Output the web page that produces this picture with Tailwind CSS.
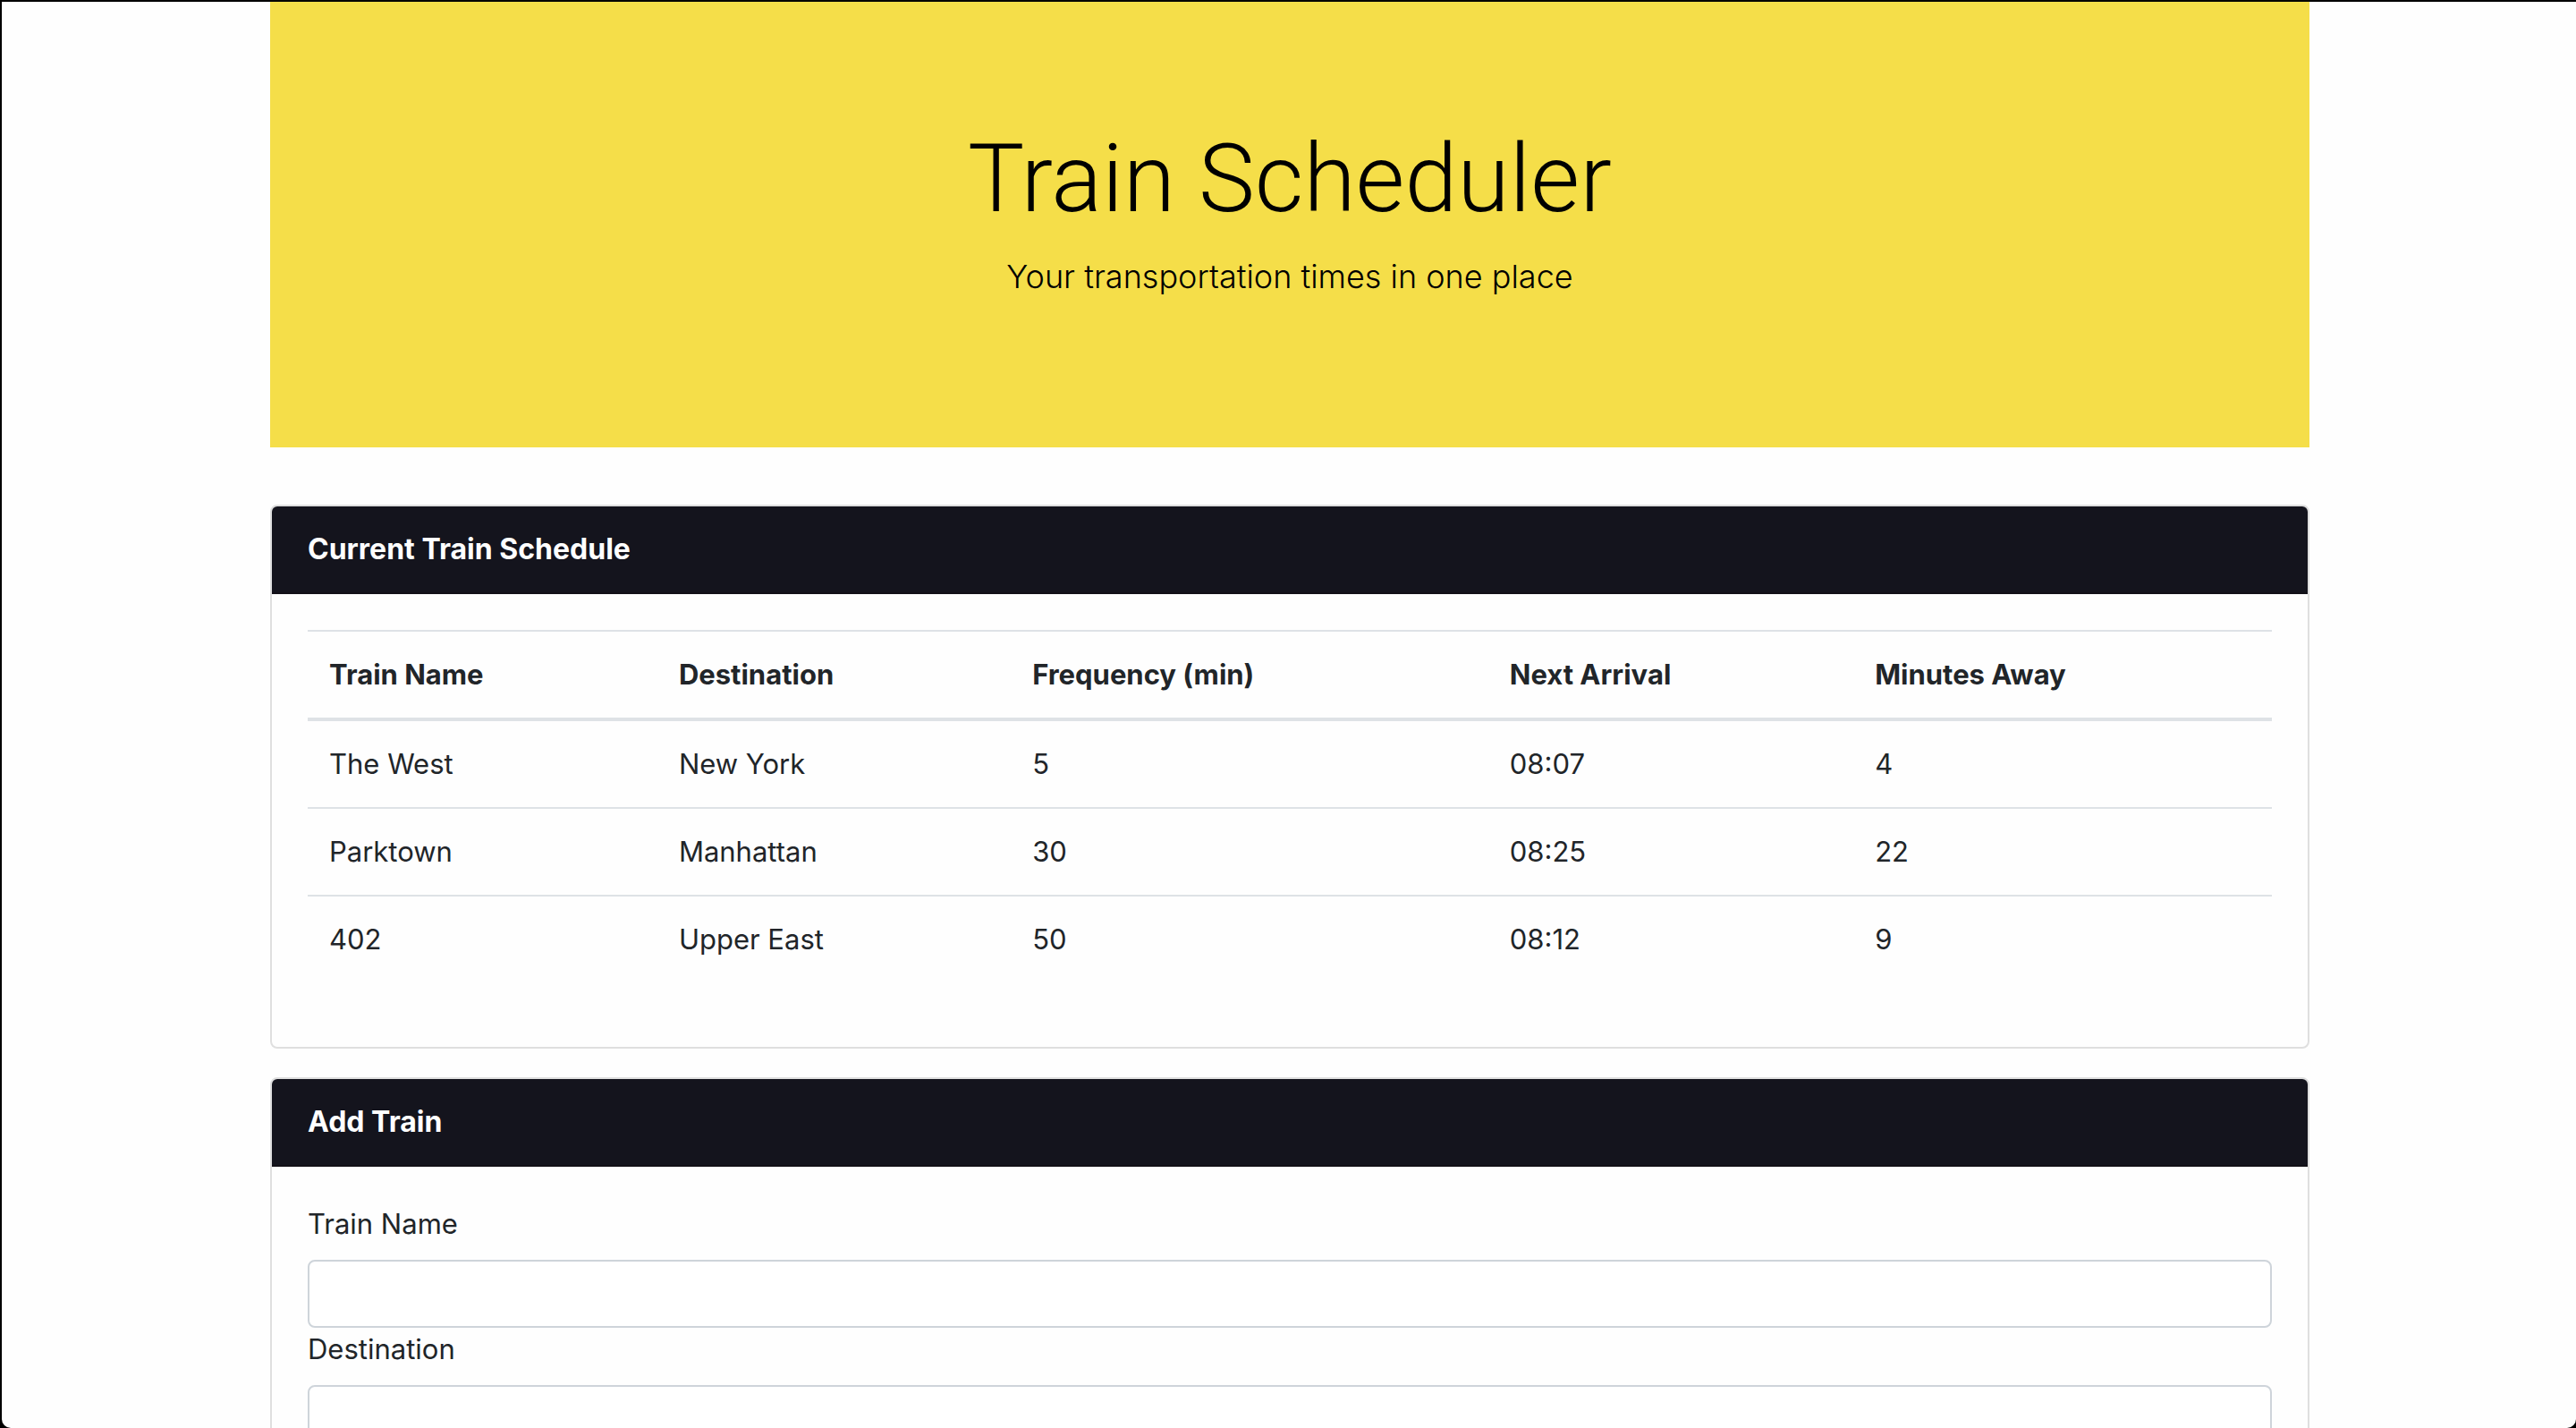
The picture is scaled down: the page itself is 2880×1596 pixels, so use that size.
<!DOCTYPE html>
<html lang="en">
<head>
<meta charset="utf-8">
<meta name="viewport" content="width=device-width, initial-scale=1">
<title>Train Scheduler</title>
<script src="https://cdn.jsdelivr.net/npm/@tailwindcss/browser@4"></script>
</head>
<body class="h-screen overflow-hidden bg-black pt-[2px] pl-[2px] font-['Inter',sans-serif] text-[31px] leading-[48px] text-[#212529]">
  <div class="h-full overflow-hidden rounded-b-[10px] bg-[#fefefe] pr-[298px] pl-[300px]">

    <header class="bg-[#f5de49] pt-[131px] pb-[125px] text-center font-light text-black">
      <h1 class="mb-3 font-['Roboto',sans-serif] text-[106px] leading-[134px]">Train Scheduler</h1>
      <p class="mb-9 text-[36px] leading-[60px]">Your transportation times in one place</p>
    </header>

    <main class="mt-16 flex flex-col gap-8">
      <section class="overflow-hidden rounded-lg border-2 border-[#dfdfdf]">
        <h2 class="border-b-2 border-[#121017] bg-[#14141d] px-10 py-6 text-[32px] leading-[48px] font-bold text-white">Current Train Schedule</h2>
        <div class="p-10 pb-18">
          <table class="w-full table-fixed border-collapse text-left">
            <thead>
              <tr class="border-t-2 border-b-4 border-[#dee2e6]">
                <th scope="col" class="w-[17.8%] px-6 py-6 font-bold">Train Name</th>
                <th scope="col" class="w-[18%] px-6 py-6 font-bold">Destination</th>
                <th scope="col" class="w-[24.3%] px-6 py-6 font-bold">Frequency (min)</th>
                <th scope="col" class="w-[18.6%] px-6 py-6 font-bold">Next Arrival</th>
                <th scope="col" class="px-6 py-6 font-bold">Minutes Away</th>
              </tr>
            </thead>
            <tbody class="divide-y-2 divide-[#dee2e6]">
              <tr>
                <td class="px-6 py-6">The West</td>
                <td class="px-6 py-6">New York</td>
                <td class="px-6 py-6">5</td>
                <td class="px-6 py-6">08:07</td>
                <td class="px-6 py-6">4</td>
              </tr>
              <tr>
                <td class="px-6 py-6">Parktown</td>
                <td class="px-6 py-6">Manhattan</td>
                <td class="px-6 py-6">30</td>
                <td class="px-6 py-6">08:25</td>
                <td class="px-6 py-6">22</td>
              </tr>
              <tr>
                <td class="px-6 py-6">402</td>
                <td class="px-6 py-6">Upper East</td>
                <td class="px-6 py-6">50</td>
                <td class="px-6 py-6">08:12</td>
                <td class="px-6 py-6">9</td>
              </tr>
            </tbody>
          </table>
        </div>
      </section>

      <section class="overflow-hidden rounded-lg border-2 border-[#dfdfdf]">
        <h2 class="border-b-2 border-[#121017] bg-[#14141d] px-10 py-6 text-[32px] leading-[48px] font-bold text-white">Add Train</h2>
        <form class="p-10">
          <label for="train-name" class="mb-4 block">Train Name</label>
          <input id="train-name" type="text" class="block h-[76px] w-full rounded-lg border-2 border-[#ced4da] bg-white px-6">
          <label for="destination" class="mb-4 block">Destination</label>
          <input id="destination" type="text" class="block h-[76px] w-full rounded-lg border-2 border-[#ced4da] bg-white px-6">
        </form>
      </section>
    </main>
  </div>
</body>
</html>
